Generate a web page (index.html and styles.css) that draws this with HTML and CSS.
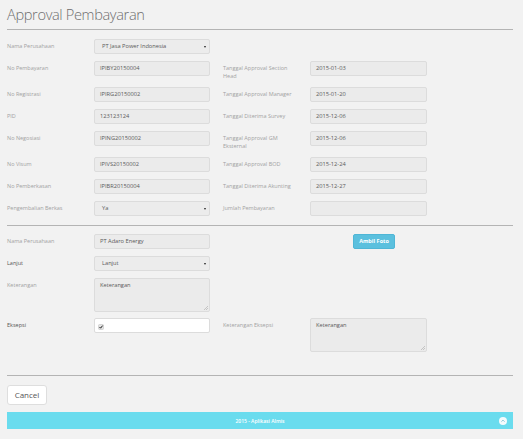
FILE: index.html
```html
<!DOCTYPE html>
<html>
<head>
<meta charset="utf-8">
<link rel="stylesheet" href="styles.css">
</head>
<body>
<div class="page">
  <h1 class="title">Approval Pembayaran</h1>
  <div class="rule"></div>

  <div class="form section-1">
    <div class="row">
      <label class="lbl">Nama Perusahaan</label>
      <div class="ctl select">PT Jasa Power Indonesia<span class="caret"></span></div>
    </div>
    <div class="row">
      <label class="lbl">No Pembayaran</label>
      <div class="ctl">IPIBY20150004</div>
      <label class="lbl lbl2">Tanggal Approval Section Head</label>
      <div class="ctl ctl2">2015-01-03</div>
    </div>
    <div class="row">
      <label class="lbl">No Registrasi</label>
      <div class="ctl">IPIRG20150002</div>
      <label class="lbl lbl2">Tanggal Approval Manager</label>
      <div class="ctl ctl2">2015-01-20</div>
    </div>
    <div class="row">
      <label class="lbl">PID</label>
      <div class="ctl">123123124</div>
      <label class="lbl lbl2">Tanggal Diterima Survey</label>
      <div class="ctl ctl2">2015-12-06</div>
    </div>
    <div class="row">
      <label class="lbl">No Negosiasi</label>
      <div class="ctl">IPING20150002</div>
      <label class="lbl lbl2">Tanggal Approval GM Eksternal</label>
      <div class="ctl ctl2">2015-12-06</div>
    </div>
    <div class="row">
      <label class="lbl">No Visum</label>
      <div class="ctl">IPIVS20150002</div>
      <label class="lbl lbl2">Tanggal Approval BOD</label>
      <div class="ctl ctl2">2015-12-24</div>
    </div>
    <div class="row">
      <label class="lbl">No Pemberkasan</label>
      <div class="ctl">IPIBR20150004</div>
      <label class="lbl lbl2">Tanggal Diterima Akunting</label>
      <div class="ctl ctl2">2015-12-27</div>
    </div>
    <div class="row">
      <label class="lbl">Pengembalian Berkas</label>
      <div class="ctl select">Ya<span class="caret"></span></div>
      <label class="lbl lbl2">Jumlah Pembayaran</label>
      <div class="ctl ctl2"></div>
    </div>
  </div>

  <div class="rule"></div>

  <div class="form section-2">
    <div class="row">
      <label class="lbl">Nama Perusahaan</label>
      <div class="ctl">PT Adaro Energy</div>
      <div class="foto-cell"><button class="btn-info">Ambil Foto</button></div>
    </div>
    <div class="row">
      <label class="lbl lbl-dark">Lanjut</label>
      <div class="ctl select">Lanjut<span class="caret"></span></div>
    </div>
    <div class="row">
      <label class="lbl">Keterangan</label>
      <div class="ctl area">Keterangan<svg class="grip" width="4" height="4" viewBox="0 0 4 4"><path d="M4 0 L0 4 M4 2 L2 4" stroke="#aaa" stroke-width="0.6"/></svg></div>
    </div>
    <div class="row row-tight">
      <label class="lbl lbl-dark">Eksepsi</label>
      <div class="ctl white"><svg class="check" width="6" height="6" viewBox="0 0 6 6"><rect x="0.5" y="0.5" width="5" height="5" rx="1" fill="#e4e4e4" stroke="#bbb" stroke-width="0.5"/><path d="M1.5 3 L2.6 4.2 L4.6 1.6" fill="none" stroke="#222" stroke-width="1"/></svg></div>
      <label class="lbl lbl2">Keterangan Eksepsi</label>
      <div class="ctl ctl2 area">Keterangan<svg class="grip" width="4" height="4" viewBox="0 0 4 4"><path d="M4 0 L0 4 M4 2 L2 4" stroke="#aaa" stroke-width="0.6"/></svg></div>
    </div>
  </div>

  <div class="rule rule-bottom"></div>

  <button class="btn-cancel">Cancel</button>

  <footer class="footer">
    <span class="footer-text">2015 - Aplikasi Almis</span>
    <span class="to-top"><svg width="8" height="8" viewBox="0 0 8 8"><circle cx="4" cy="4" r="4" fill="#f4fbfd"/><path d="M2.4 4.7 L4 3.1 L5.6 4.7" fill="none" stroke="#8fc9d8" stroke-width="1"/></svg></span>
  </footer>
</div>
</body>
</html>
```

FILE: styles.css
```css
html, body {
  margin: 0;
  padding: 0;
  background: #f2f2f2;
}

body {
  font-family: "Open Sans", "Noto Sans", sans-serif;
  color: #555;
}

.page {
  width: 506px;
  padding: 0 10px 0 7px;
}

.title {
  margin: 0;
  padding-top: 3.5px;
  height: 25.5px;
  font-size: 14.6px;
  line-height: 20px;
  font-weight: 300;
  color: #6e6e6e;
  letter-spacing: -0.35px;
}

.rule {
  height: 1px;
  background: #b4b4b4;
}

.section-1 {
  padding: 9px 0;
}

.section-2 {
  padding: 8px 0 23px;
}

.row {
  display: flex;
  align-items: flex-start;
  margin-bottom: 7px;
}

.row:last-child {
  margin-bottom: 0;
}

.row-tight {
  margin-top: -1px;
}

.lbl {
  flex: 0 0 87px;
  width: 87px;
  box-sizing: border-box;
  padding-top: 2.5px;
  padding-right: 10px;
  font-size: 5.5px;
  line-height: 8.3px;
  color: #a2a2a2;
}

.lbl2 {
  margin-left: 13px;
}

.lbl-dark {
  color: #555;
}

.ctl {
  position: relative;
  flex: 0 0 116px;
  width: 116px;
  height: 15px;
  box-sizing: border-box;
  padding: 0 5px;
  border: 1px solid #dcdcdc;
  border-radius: 2px;
  background: #ebebeb;
  font-size: 5.7px;
  line-height: 13px;
  color: #5a5a5a;
}

.ctl2 {
  flex-basis: 117px;
  width: 117px;
}

.select {
  padding-left: 7px;
  background: #ececec;
}

.caret {
  position: absolute;
  right: 3px;
  top: 5.5px;
  width: 0;
  height: 0;
  border-left: 1.5px solid transparent;
  border-right: 1.5px solid transparent;
  border-top: 2px solid #222;
}

.area {
  height: 34px;
  line-height: 10px;
  padding-top: 1px;
}

.grip {
  position: absolute;
  right: 1px;
  bottom: 1px;
}

.white {
  background: #fff;
}

.check {
  position: absolute;
  left: 3px;
  top: 4.5px;
}

.foto-cell {
  margin-left: 143px;
}

.btn-info {
  display: block;
  width: 42px;
  height: 15px;
  padding: 0;
  border: 1px solid #4fb6d6;
  border-radius: 2px;
  background: #5bc0de;
  color: #fff;
  font-family: "Open Sans", "Noto Sans", sans-serif;
  font-size: 5.5px;
  font-weight: 700;
  line-height: 13px;
  text-align: center;
}

.btn-cancel {
  display: block;
  margin-top: 9px;
  width: 40px;
  height: 20px;
  padding: 0;
  border: 1px solid #dedede;
  border-radius: 3px;
  background: #fff;
  color: #555;
  font-family: "Open Sans", "Noto Sans", sans-serif;
  font-size: 8px;
  line-height: 18px;
  text-align: center;
}

.footer {
  position: relative;
  margin-top: 7px;
  height: 17px;
  background: #6adcee;
  display: flex;
  align-items: center;
  justify-content: center;
}

.footer-text {
  font-size: 5px;
  font-weight: 600;
  color: #fff;
}

.to-top {
  position: absolute;
  right: 6px;
  top: 4.5px;
  width: 8px;
  height: 8px;
  line-height: 0;
}
```
